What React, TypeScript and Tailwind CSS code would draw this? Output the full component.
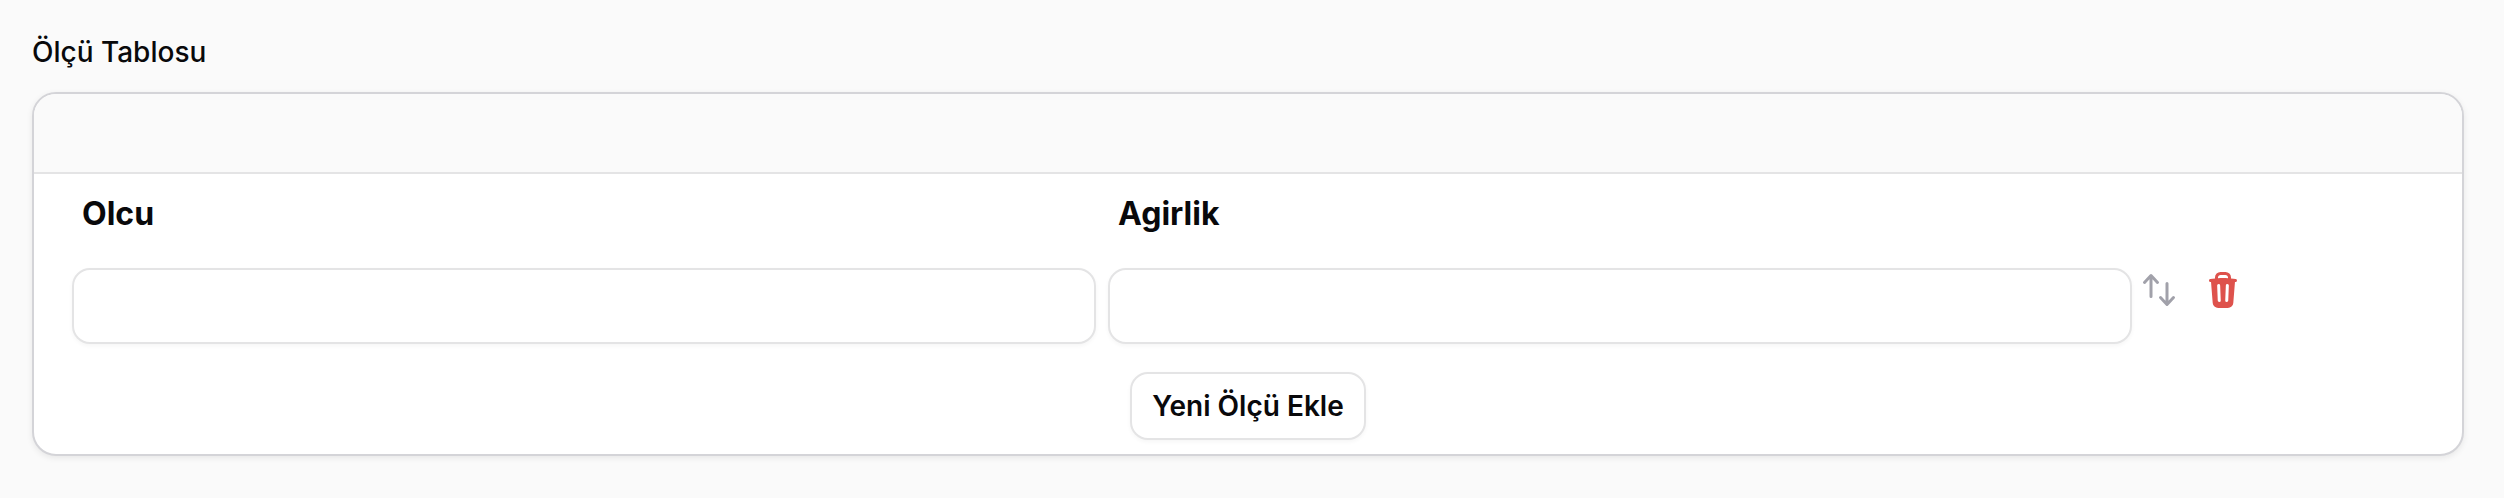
import { HiMiniArrowsUpDown, HiMiniTrash } from "react-icons/hi2";

const columns = ["Olcu", "Agirlik"];

export default function App() {
  return (
    <main className="min-h-screen bg-[#fafafa] px-8 py-7 pr-10 font-['Inter',sans-serif] text-[#09090b]">
      <h2 id="size-table" className="mb-4 text-[28px] leading-12 font-medium">
        Ölçü Tablosu
      </h2>
      <section
        aria-labelledby="size-table"
        className="overflow-hidden rounded-3xl border-2 border-[#d4d4d8] bg-white shadow-[0_2px_6px_rgba(0,0,0,0.08)]"
      >
        <header className="h-20 border-b-2 border-[#e4e4e5] bg-[#fafafa]" />
        <div className="flex flex-col items-center px-8 pb-3.5">
          <table className="w-full table-fixed border-collapse">
            <thead>
              <tr>
                {columns.map((column) => (
                  <th key={column} scope="col" className="px-4 py-4 text-left text-[32px] leading-12 font-bold">
                    {column}
                  </th>
                ))}
                <td className="w-[292px]" />
              </tr>
            </thead>
            <tbody>
              <tr>
                {columns.map((column) => (
                  <td key={column} className="px-1.5 py-3.5">
                    <input
                      type="text"
                      aria-label={column}
                      className="block h-[76px] w-full rounded-[18px] border-2 border-[#e4e4e5] bg-white px-6 text-[28px] shadow-[0_2px_4px_rgba(0,0,0,0.04)] outline-none"
                    />
                  </td>
                ))}
                <td className="py-4 pl-px align-top">
                  <div className="flex gap-6">
                    <button type="button" aria-label="Sırala" className="text-[#a1a1aa]">
                      <HiMiniArrowsUpDown className="size-10" />
                    </button>
                    <button type="button" aria-label="Sil" className="text-[#de524c]">
                      <HiMiniTrash className="size-10" />
                    </button>
                  </div>
                </td>
              </tr>
            </tbody>
          </table>
          <button
            type="button"
            className="mt-3.5 h-[68px] rounded-[18px] border-2 border-[#e4e4e5] bg-white px-5 text-[28px] leading-10 font-semibold whitespace-nowrap shadow-[0_2px_4px_rgba(0,0,0,0.04)]"
          >
            Yeni Ölçü Ekle
          </button>
        </div>
      </section>
    </main>
  );
}
